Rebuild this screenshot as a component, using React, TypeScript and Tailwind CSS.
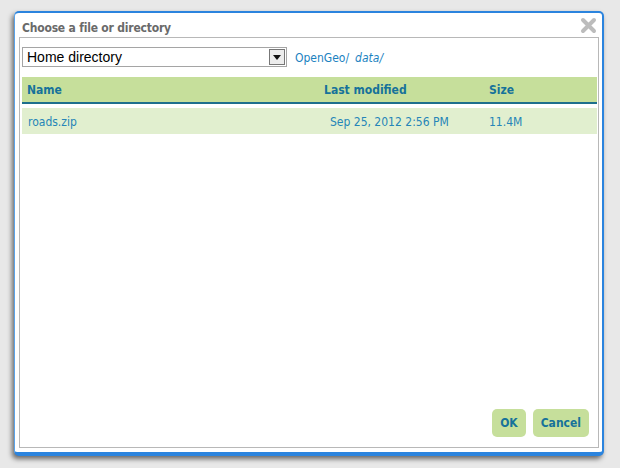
import React from 'react'

const font = { fontFamily: 'Tahoma, "DejaVu Sans Condensed", "DejaVu Sans", sans-serif' }

function CloseIcon() {
  return (
    <svg width="17" height="17" viewBox="0 0 17 17">
      <path d="M3 3 L14 14 M14 3 L3 14" stroke="#bcbcbc" strokeWidth="4" strokeLinecap="round" />
    </svg>
  )
}

export default function App() {
  return (
    <div className="w-[620px] h-[468px] bg-[#e8e8e8] pt-[11px] pl-[14px]" style={font}>
      <div className="w-[590px] h-[445px] bg-white rounded-[5px] border-t-2 border-l border-r-2 border-b-4 border-t-[#2b84de] border-l-[#5aa3ea] border-r-[#2b84de] border-b-[#2b84de] shadow-[-2px_3px_5px_rgba(0,0,0,0.55)] flex flex-col">
        {/* Title bar */}
        <div className="h-[24px] flex items-center justify-between pl-[7px] pr-[5px] shrink-0">
          <span className="text-[12px] font-bold text-[#6a6a6a] tracking-[-0.2px] pt-[5px]">Choose a file or directory</span>
          <CloseIcon />
        </div>

        {/* Body */}
        <div className="flex-1 ml-[4px] mr-[3px] mb-[4px] border border-[#b8b8b8] pl-[2px] pr-[1px] pt-[9px] pb-[9px] flex flex-col">
          <div className="flex items-center gap-[8px]">
            <div className="w-[265px] h-[20px] border border-[#a5a5a5] flex items-center justify-between bg-white">
              <span className="pl-[4px] text-[14px] text-black" style={{ fontFamily: '"Liberation Sans", Arial, sans-serif' }}>Home directory</span>
              <div className="w-[16px] h-[16px] mr-[1px] border border-[#777] bg-[#ececec] flex items-center justify-center">
                <svg width="8" height="5" viewBox="0 0 8 5"><path d="M0 0 H8 L4 5 Z" fill="#111" /></svg>
              </div>
            </div>
            <span className="text-[12px] text-[#1a82bf] pt-[1px]">
              OpenGeo/<span className="italic ml-[6px]">data/</span>
            </span>
          </div>

          {/* Table */}
          <div className="mt-[10px]">
            <div className="h-[27px] bg-[#c6df9b] border-b-2 border-[#1d6f8c] flex items-center text-[12px] font-bold text-[#16729a] pt-[1px]">
              <span className="w-[302px] pl-[5px]">Name</span>
              <span className="w-[165px]">Last modified</span>
              <span>Size</span>
            </div>
            <div className="mt-[4px] h-[26px] bg-[#e1efcf] flex items-center text-[12px] text-[#2585b8] pt-[2px]">
              <span className="w-[308px] pl-[6px]">roads.zip</span>
              <span className="w-[159px]">Sep 25, 2012 2:56 PM</span>
              <span>11.4M</span>
            </div>
          </div>

          <div className="flex-1" />

          <div className="flex justify-end gap-[7px] pr-[8px] pb-[1px]">
            <button className="h-[28px] px-[8px] rounded-[5px] bg-[#c6df9b] text-[12px] font-bold text-[#16729a]">OK</button>
            <button className="h-[28px] px-[8px] rounded-[5px] bg-[#c6df9b] text-[12px] font-bold text-[#16729a]">Cancel</button>
          </div>
        </div>
      </div>
    </div>
  )
}
